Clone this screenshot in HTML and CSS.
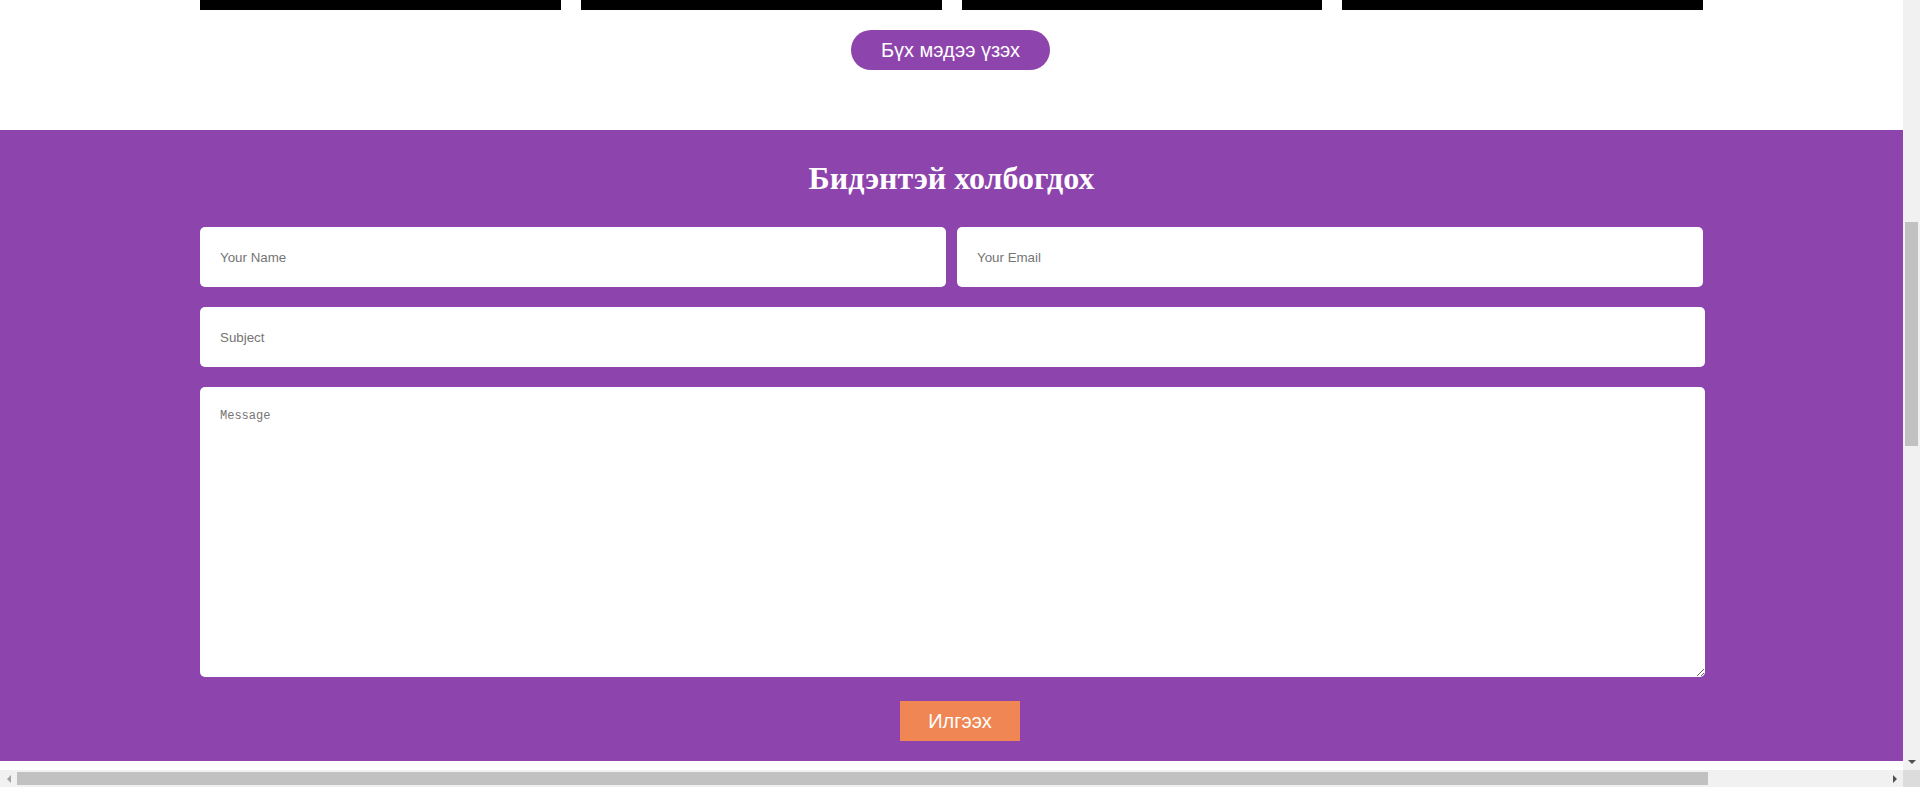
FILE: index.html
```html
<!DOCTYPE html>
<html lang="mn">
<head>
<meta charset="utf-8">
<title>Бидэнтэй холбогдох</title>
<link rel="stylesheet" href="styles.css">
</head>
<body>
<div class="window">
  <main class="page">
    <section class="news">
      <div class="news-grid">
        <div class="news-img"></div>
        <div class="news-img"></div>
        <div class="news-img"></div>
        <div class="news-img"></div>
      </div>
      <div class="more-wrap">
        <a class="btn-more" href="#">Бүх мэдээ үзэх</a>
      </div>
    </section>
    <section class="contact">
      <h2 class="contact-title">Бидэнтэй холбогдох</h2>
      <form class="contact-form">
        <div class="row-two">
          <input class="field" type="text" placeholder="Your Name">
          <input class="field" type="email" placeholder="Your Email">
        </div>
        <input class="field wide" type="text" placeholder="Subject">
        <textarea class="field wide message" placeholder="Message"></textarea>
        <div class="submit-row">
          <button class="btn-send" type="button">Илгээх</button>
        </div>
      </form>
    </section>
  </main>
  <div class="vscroll">
    <div class="arrow arrow-up"></div>
    <div class="vtrack"><div class="vthumb"></div></div>
    <div class="arrow arrow-down"></div>
  </div>
  <div class="hscroll">
    <div class="arrow arrow-left"></div>
    <div class="htrack"><div class="hthumb"></div></div>
    <div class="arrow arrow-right"></div>
  </div>
  <div class="corner"></div>
</div>
</body>
</html>
```

FILE: styles.css
```css
* { box-sizing: border-box; }

html, body {
  margin: 0;
  padding: 0;
  height: 100%;
  overflow: hidden;
}

body {
  font-family: "Liberation Sans", Arial, sans-serif;
  background: #ffffff;
}

.window {
  display: grid;
  grid-template-columns: 1fr 17px;
  grid-template-rows: 1fr 17px;
  width: 1920px;
  height: 787px;
}

.page {
  overflow: hidden;
  background: #ffffff;
  min-width: 0;
}

/* news strip */
.news-grid {
  width: 1503px;
  margin: 0 auto;
  display: grid;
  grid-template-columns: repeat(4, 1fr);
  gap: 20px;
}

.news-img {
  height: 10px;
  background: #000000;
}

.more-wrap {
  display: flex;
  justify-content: center;
  padding: 20px 2px 60px 0;
}

.btn-more {
  display: block;
  width: 199px;
  height: 40px;
  line-height: 40px;
  border-radius: 20px;
  background: #8e44ad;
  color: #ffffff;
  text-decoration: none;
  text-align: center;
  font-size: 20px;
}

/* contact */
.contact {
  background: #8e44ad;
  padding: 30px 0 20px;
}

.contact-title {
  margin: 0 0 31px;
  text-align: center;
  color: #ffffff;
  font-family: "Liberation Serif", "Times New Roman", serif;
  font-weight: bold;
  font-size: 32px;
  line-height: 36px;
}

.contact-form {
  width: 1503px;
  margin: 0 auto;
  display: flex;
  flex-direction: column;
  gap: 20px;
}

.row-two {
  display: grid;
  grid-template-columns: 1fr 1fr;
  gap: 11px;
}

.field {
  display: block;
  width: 100%;
  height: 60px;
  border: none;
  border-radius: 5px;
  background: #ffffff;
  padding: 0 20px;
  font-family: "Liberation Sans", Arial, sans-serif;
  font-size: 13.33px;
  color: #333333;
  outline: none;
}

.field.wide {
  width: calc(100% + 2px);
}

.field::placeholder {
  color: #757575;
}

.message {
  height: 290px;
  padding: 21px 20px 20px;
  font-family: "Liberation Mono", "Courier New", monospace;
  font-size: 12px;
  line-height: 16px;
  resize: both;
}

.submit-row {
  display: flex;
  justify-content: center;
  padding-left: 17px;
  margin-top: 4px;
}

.btn-send {
  width: 120px;
  height: 40px;
  border: none;
  border-radius: 0;
  background: #ef8653;
  color: #ffffff;
  font-family: "Liberation Sans", Arial, sans-serif;
  font-size: 20px;
  padding: 0;
}

/* scrollbars */
.vscroll {
  background: #f1f1f1;
  display: flex;
  flex-direction: column;
}

.vtrack {
  flex: 1;
  padding: 0 2px;
}

.vthumb {
  margin-top: 205px;
  height: 224px;
  background: #c1c1c1;
}

.hscroll {
  background: #f1f1f1;
  display: flex;
}

.htrack {
  flex: 1;
  padding: 2px 0;
}

.hthumb {
  width: 1691px;
  height: 13px;
  background: #c1c1c1;
}

.corner {
  background: #dcdcdc;
}

.arrow {
  flex: 0 0 17px;
  width: 17px;
  height: 17px;
  display: flex;
  align-items: center;
  justify-content: center;
}

.arrow::before {
  content: "";
  width: 0;
  height: 0;
  border-style: solid;
}

.arrow-up::before {
  border-width: 0 4px 4px 4px;
  border-color: transparent transparent #f1f1f1 transparent;
}

.arrow-down::before {
  border-width: 4px 4px 0 4px;
  border-color: #505050 transparent transparent transparent;
}

.arrow-left::before {
  border-width: 4px 4px 4px 0;
  border-color: transparent #a3a3a3 transparent transparent;
}

.arrow-right::before {
  border-width: 4px 0 4px 4px;
  border-color: transparent transparent transparent #505050;
}
```
